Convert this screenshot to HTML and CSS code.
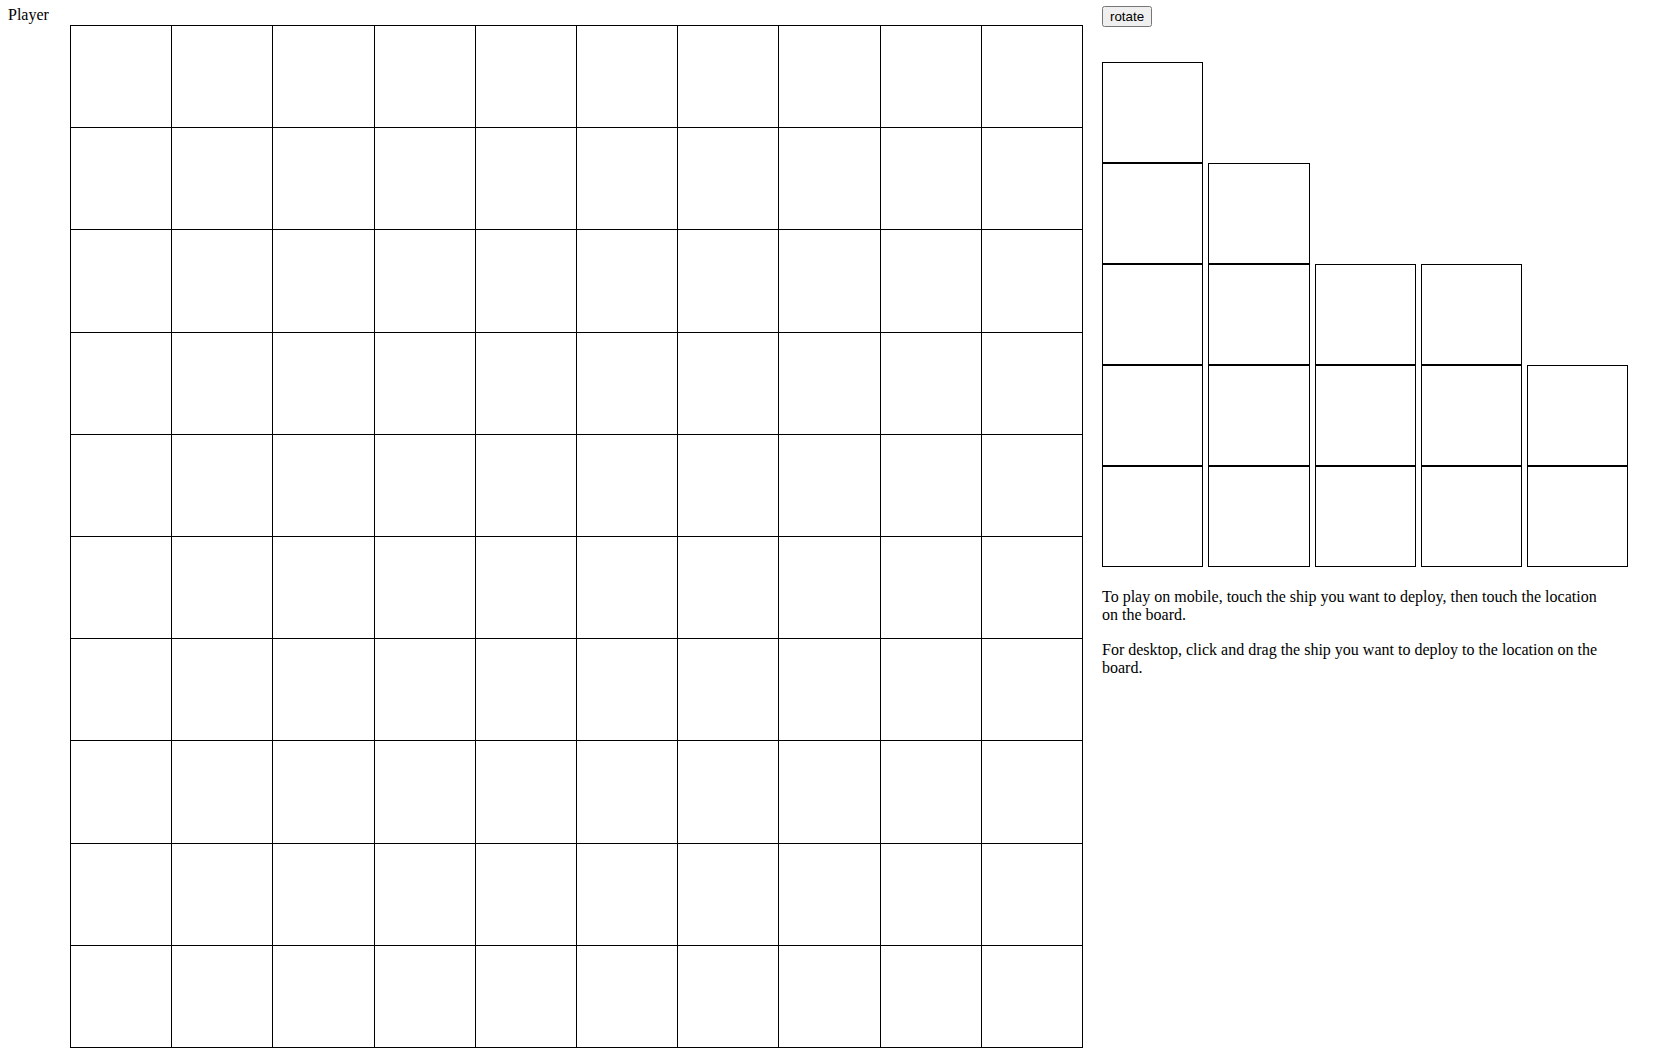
FILE: index.html
```html
<!DOCTYPE html>
<html lang="en">
<head>
    <meta charset="UTF-8">
    <meta name="viewport" content="width=device-width, initial-scale=1.0">
    <title>Battleship - Deploy</title>
    <link rel="stylesheet" href="styles.css">
</head>
<body>
    <div class="game">
        <div class="player-label">Player</div>
        <div class="board" id="player-board"></div>

        <div class="side">
            <button class="rotate-btn" onclick="rotateShips()">rotate</button>

            <div class="ships" id="ships">
                <div class="ship" data-length="5">
                    <div class="ship-cell"></div>
                    <div class="ship-cell"></div>
                    <div class="ship-cell"></div>
                    <div class="ship-cell"></div>
                    <div class="ship-cell"></div>
                </div>
                <div class="ship" data-length="4">
                    <div class="ship-cell"></div>
                    <div class="ship-cell"></div>
                    <div class="ship-cell"></div>
                    <div class="ship-cell"></div>
                </div>
                <div class="ship" data-length="3">
                    <div class="ship-cell"></div>
                    <div class="ship-cell"></div>
                    <div class="ship-cell"></div>
                </div>
                <div class="ship" data-length="3">
                    <div class="ship-cell"></div>
                    <div class="ship-cell"></div>
                    <div class="ship-cell"></div>
                </div>
                <div class="ship" data-length="2">
                    <div class="ship-cell"></div>
                    <div class="ship-cell"></div>
                </div>
            </div>

            <div class="help">
                <p>To play on mobile, touch the ship you want to deploy, then touch the location on the board.</p>
                <p>For desktop, click and drag the ship you want to deploy to the location on the board.</p>
            </div>
        </div>
    </div>

    <script>
        const board = document.getElementById('player-board');
        for (let i = 0; i < 100; i++) {
            const cell = document.createElement('div');
            cell.className = 'cell';
            cell.dataset.x = i % 10;
            cell.dataset.y = Math.floor(i / 10);
            board.appendChild(cell);
        }

        function rotateShips() {
            document.getElementById('ships').classList.toggle('horizontal');
        }
    </script>
</body>
</html>
```

FILE: styles.css
```css
body {
    margin: 0;
    font-family: "Liberation Serif", "Times New Roman", serif;
    font-size: 16px;
    color: #000;
    background-color: #fff;
}

.game {
    display: flex;
    align-items: flex-start;
    padding: 6px 8px;
}

.player-label {
    width: 62px;
    flex-shrink: 0;
}

.board {
    flex-shrink: 0;
    margin-top: 19px;
    width: 1013px;
    height: 1023px;
    display: grid;
    grid-template-columns: repeat(10, 1fr);
    grid-template-rows: repeat(10, 1fr);
    border-left: 1px solid #000;
    border-top: 1px solid #000;
    box-sizing: border-box;
}

.cell {
    border-right: 1px solid #000;
    border-bottom: 1px solid #000;
}

.side {
    margin-left: 19px;
}

.rotate-btn {
    display: block;
}

.ships {
    display: flex;
    align-items: flex-end;
    gap: 5px;
    margin-top: 35px;
}

.ship-cell {
    width: 101.25px;
    height: 101px;
    border: 1px solid #000;
    box-sizing: border-box;
}

.help {
    width: 505px;
    padding-top: 5px;
}

.help p {
    margin: 16px 0 17px;
}
```
